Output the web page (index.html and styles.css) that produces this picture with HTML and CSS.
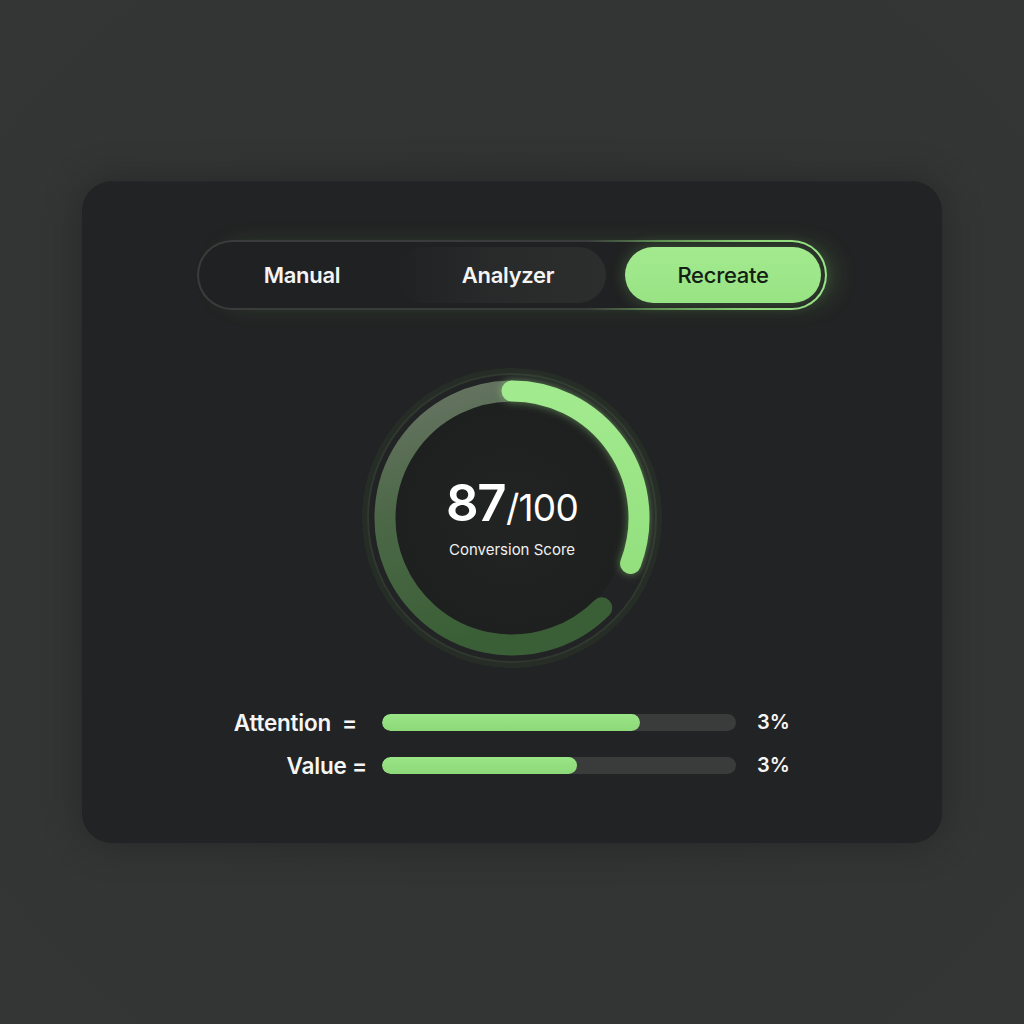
FILE: index.html
```html
<!DOCTYPE html>
<html lang="en">
<head>
<meta charset="utf-8">
<title>Conversion Score</title>
<link rel="stylesheet" href="styles.css">
</head>
<body>
<div class="page">
  <div class="card">
    <div class="segmented">
      <div class="seg seg-manual">Manual</div>
      <div class="seg seg-analyzer"><span class="seg-bg"></span><span class="seg-label">Analyzer</span></div>
      <div class="seg seg-active">Recreate</div>
    </div>

    <div class="ring">
      <svg class="ring-svg" width="300" height="300" viewBox="0 0 300 300">
        <defs>
          <linearGradient id="trackGrad" x1="0" y1="0" x2="0.3" y2="1">
            <stop offset="0" stop-color="#6a7566"/>
            <stop offset="0.45" stop-color="#4c6847"/>
            <stop offset="1" stop-color="#3a5f36"/>
          </linearGradient>
          <linearGradient id="progGrad" x1="0" y1="0" x2="0" y2="1">
            <stop offset="0" stop-color="#a2ea8e"/>
            <stop offset="1" stop-color="#94e07f"/>
          </linearGradient>
          <radialGradient id="innerGrad" cx="0.5" cy="0.5" r="0.5">
            <stop offset="0" stop-color="#222423"/>
            <stop offset="1" stop-color="#1e201f"/>
          </radialGradient>
          <filter id="glow" x="-30%" y="-30%" width="160%" height="160%">
            <feGaussianBlur stdDeviation="4" result="b"/>
            <feComponentTransfer in="b" result="bf"><feFuncA type="linear" slope="0.5"/></feComponentTransfer>
            <feMerge><feMergeNode in="bf"/><feMergeNode in="SourceGraphic"/></feMerge>
          </filter>
        </defs>
        <circle cx="150" cy="150" r="147" fill="none" stroke="rgba(110,200,90,0.06)" stroke-width="6"/>
        <circle cx="150" cy="150" r="144" fill="none" stroke="#30382f" stroke-width="2"/>
        <circle cx="150" cy="150" r="117" fill="url(#innerGrad)"/>
        <path d="M 239.8 239.8 A 127 127 0 1 1 150 23" fill="none" stroke="url(#trackGrad)" stroke-width="21" stroke-linecap="round"/>
        <path d="M 150 23 A 127 127 0 0 1 268.6 195.5" fill="none" stroke="url(#progGrad)" stroke-width="21" stroke-linecap="round" filter="url(#glow)"/>
      </svg>
      <div class="ring-text">
        <div class="score"><span class="score-num">87</span><span class="score-max">/100</span></div>
        <div class="score-label">Conversion Score</div>
      </div>
    </div>

    <div class="metrics">
      <div class="metric-label label-attention">Attention&nbsp; =</div>
      <div class="bar"><div class="bar-fill" style="width: 73%"></div></div>
      <div class="metric-value">3%</div>

      <div class="metric-label">Value =</div>
      <div class="bar"><div class="bar-fill" style="width: 55%"></div></div>
      <div class="metric-value">3%</div>
    </div>
  </div>
</div>
</body>
</html>
```

FILE: styles.css
```css
* { box-sizing: border-box; }

html, body {
  margin: 0;
  padding: 0;
}

body {
  width: 1024px;
  height: 1024px;
  background: radial-gradient(ellipse at 50% 50%, #2e3130 0%, #323534 60%, #333635 100%);
  font-family: Inter, "Noto Sans", "Liberation Sans", sans-serif;
  color: #ffffff;
  overflow: hidden;
}

.page {
  width: 1024px;
  height: 1024px;
  display: flex;
  align-items: center;
  justify-content: center;
}

.card {
  width: 860px;
  height: 662px;
  background: #222324;
  border-radius: 30px;
  box-shadow: 0 0 40px rgba(0, 0, 0, 0.25), inset 0 1px 0 rgba(255,255,255,0.02);
  display: flex;
  flex-direction: column;
  align-items: center;
  padding-top: 59px;
}

/* Segmented control */
.segmented {
  width: 630px;
  height: 70px;
  border-radius: 35px;
  border: 2px solid transparent;
  background:
    linear-gradient(#202122, #202122) padding-box,
    linear-gradient(90deg, #3a3c3b 0%, #3a3c3b 62%, #5f8f52 74%, #8fd67a 88%, #9be58a 100%) border-box;
  box-shadow: 14px 0 26px -8px rgba(130, 220, 105, 0.22);
  display: flex;
  align-items: center;
  padding-right: 4px;
}

.seg {
  height: 56px;
  display: flex;
  align-items: center;
  justify-content: center;
  font-size: 22px;
  font-weight: 600;
  letter-spacing: -0.3px;
  color: #f4f4f4;
}

.seg-manual {
  width: 206px;
}

.seg-analyzer {
  width: 206px;
  position: relative;
}

.seg-bg {
  position: absolute;
  top: 0;
  bottom: 0;
  left: -10px;
  right: 5px;
  border-radius: 28px;
  background: linear-gradient(90deg, rgba(44,45,45,0) 0%, rgba(44,45,45,0.7) 45%, #2c2d2d 100%);
}

.seg-label {
  position: relative;
}

.seg-active {
  width: 196px;
  margin-left: 14px;
  border-radius: 28px;
  background: linear-gradient(180deg, #a3ea8f 0%, #98e384 100%);
  color: #142013;
  font-weight: 500;
  box-shadow: 0 0 16px rgba(140, 225, 115, 0.28);
}

/* Ring */
.ring {
  position: relative;
  width: 300px;
  height: 300px;
  margin-top: 58px;
}

.ring-svg {
  display: block;
}

.ring-text {
  position: absolute;
  inset: 0;
  display: flex;
  flex-direction: column;
  align-items: center;
  justify-content: center;
  padding-top: 0;
}

.score {
  display: flex;
  align-items: baseline;
  line-height: 1;
}

.score-num {
  font-size: 51px;
  font-weight: 600;
  letter-spacing: -1.5px;
}

.score-max {
  font-size: 37px;
  font-weight: 400;
  margin-left: 1px;
  letter-spacing: -0.8px;
}

.score-label {
  font-size: 15px;
  font-weight: 400;
  margin-top: 12px;
  color: #f0f0f0;
}

/* Metrics */
.metrics {
  margin-top: 46px;
  display: grid;
  grid-template-columns: 150px 354px 50px;
  column-gap: 15px;
  row-gap: 26px;
  align-items: center;
  width: 590px;
}

.metric-label {
  text-align: right;
  font-size: 22.5px;
  font-weight: 600;
  letter-spacing: -0.2px;
  color: #f5f5f5;
  line-height: 17px;
  white-space: nowrap;
}

.label-attention {
  padding-right: 10px;
}

.bar {
  height: 17px;
  border-radius: 9px;
  background: #3a3b3b;
  overflow: hidden;
}

.bar-fill {
  height: 100%;
  border-radius: 9px;
  background: linear-gradient(180deg, #9ae687 0%, #8dd979 100%);
}

.metric-value {
  font-size: 20px;
  font-weight: 600;
  padding-left: 6px;
  line-height: 17px;
  color: #f5f5f5;
}
```
